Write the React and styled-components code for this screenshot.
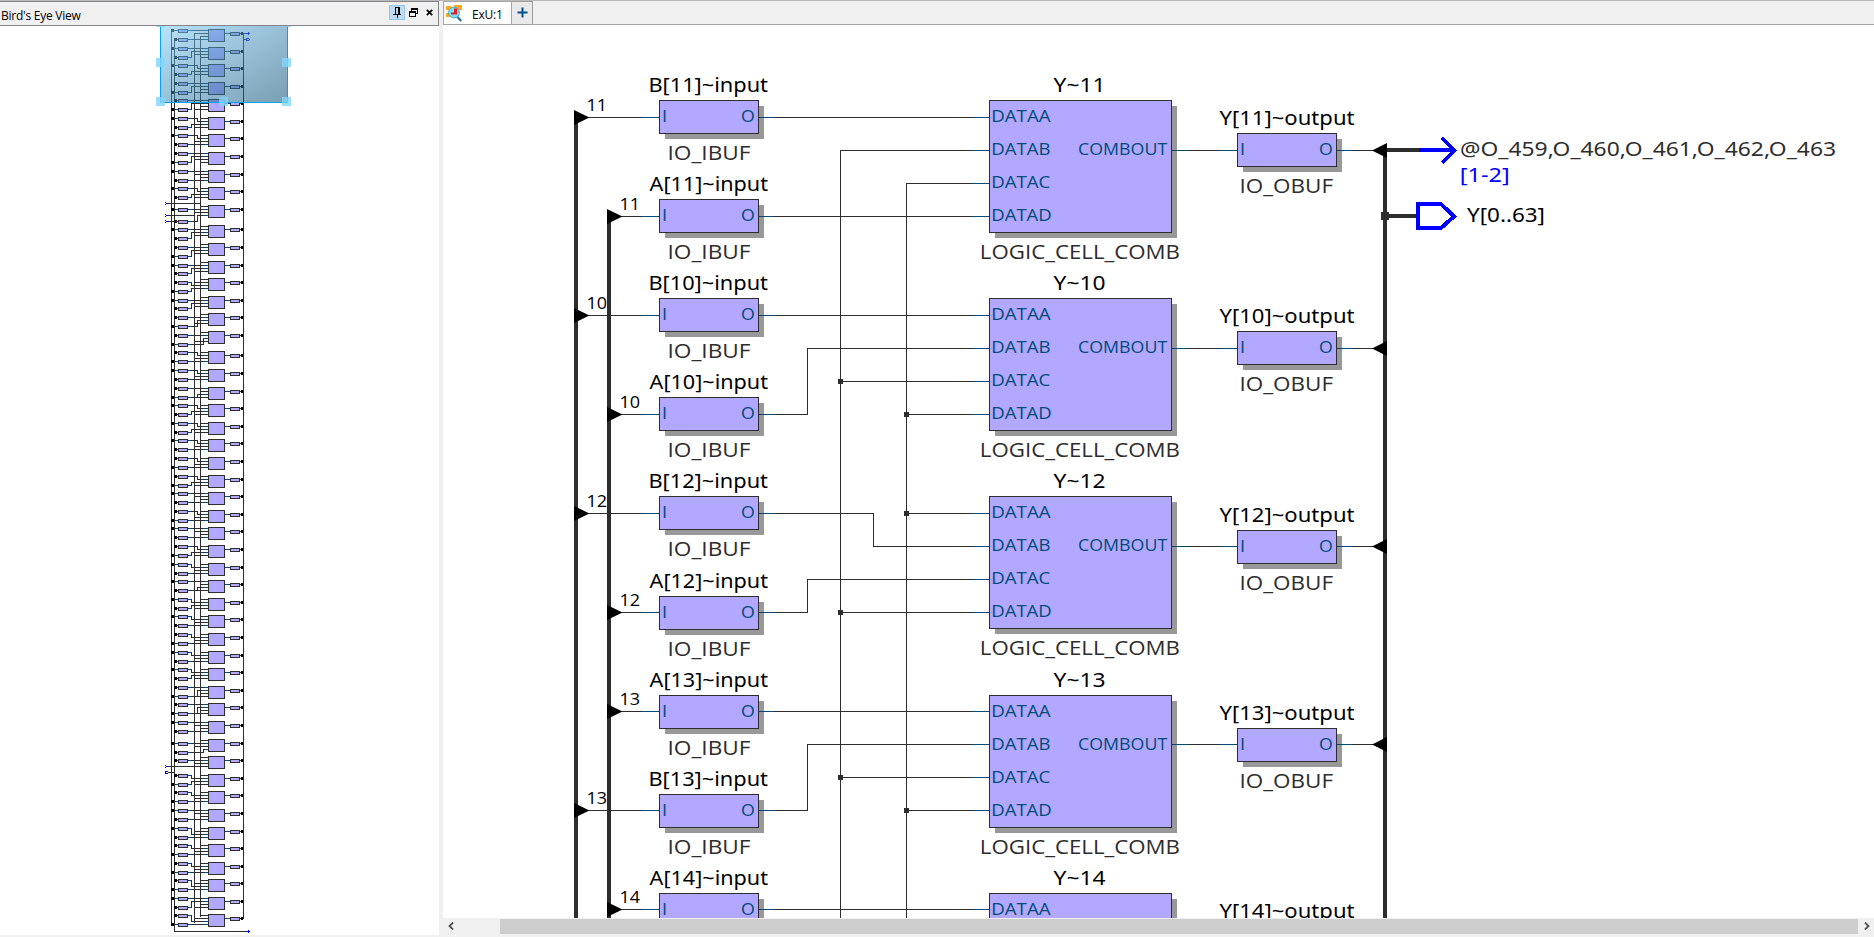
import React from "react";
import styled, { createGlobalStyle } from "styled-components";

const INK = "#2d2d2d";
const PIN = "#004b78";
const FILL = "#b3a8ff";

const Global = createGlobalStyle`
  html, body { margin: 0; padding: 0; height: 100%; overflow: hidden; }
  body { background: #f0f0f0; font-family: "Open Sans", "Noto Sans", sans-serif; color: #000; }
  * { box-sizing: border-box; }
  svg { display: block; }
`;

const Frame = styled.div`
  display: flex;
  width: 1874px;
  height: 937px;
  border-top: 1px solid #b9b9b9;
  background: #f0f0f0;
`;

const Dock = styled.section`
  display: flex;
  flex-direction: column;
  width: 439px;
  height: 934px;
  background: #fff;
`;

const DockHeader = styled.header`
  display: flex;
  align-items: flex-start;
  justify-content: space-between;
  height: 25px;
  padding: 3px 1px 0 1px;
  border: 1px solid #838388;
  border-left: 0;
  background: #f0f0f0;
`;

const DockTitle = styled.h1`
  margin: 3px 0 0;
  font-size: 12px;
  line-height: 16px;
  font-weight: 400;
  letter-spacing: -0.25px;
`;

const DockButtons = styled.div`
  display: flex;
  gap: 0;
`;

const DockButton = styled.button`
  display: flex;
  align-items: center;
  justify-content: center;
  width: 16px;
  height: 15px;
  padding: 0;
  border: 1px solid ${(p) => (p.$on ? "#94c6ee" : "transparent")};
  background: ${(p) => (p.$on ? "#bfdcf4" : "transparent")};
`;

const Editor = styled.main`
  display: flex;
  flex-direction: column;
  width: 1431px;
  margin-left: 4px;
`;

const TabBar = styled.nav`
  display: flex;
  height: 24px;
  border-bottom: 1px solid #a5a5a5;
`;

const Tab = styled.div`
  display: flex;
  align-items: center;
  gap: 9px;
  width: 69px;
  height: 24px;
  padding: 0 0 0 2px;
  border: 1px solid #a5a5a5;
  background: #fff;
  font-size: 12px;
`;

const TabLabel = styled.span`
  padding-top: 4px;
  line-height: 14px;
  letter-spacing: -0.2px;
`;

const AddTab = styled.button`
  display: flex;
  align-items: center;
  justify-content: center;
  width: 21px;
  height: 24px;
  padding: 0 0 2px;
  border: 1px solid #a0a0a0;
  border-left-width: 0;
  background: #e9e9e9;
`;

const Canvas = styled.div`
  height: 893px;
  background: #fff;
  overflow: hidden;
`;

const ScrollBar = styled.div`
  display: flex;
  align-items: center;
  height: 16px;
`;

const ScrollArrow = styled.div`
  display: flex;
  align-items: center;
  padding-left: ${(p) => p.$pad}px;
  width: ${(p) => p.$w}px;
`;

const Thumb = styled.div`
  flex: 1;
  height: 15px;
  background: #cdcdcd;
`;

const Wire = styled.path`
  fill: none;
  stroke: ${(p) => p.$color || INK};
  stroke-width: ${(p) => p.$w || 1};
  shape-rendering: crispEdges;
`;

const Box = styled.rect`
  fill: ${FILL};
  stroke: ${INK};
  stroke-width: 1;
  shape-rendering: crispEdges;
`;

const Shadow = styled.rect`
  fill: #989898;
  shape-rendering: crispEdges;
`;

const Dot = styled.rect`
  fill: ${(p) => p.$color || INK};
  shape-rendering: crispEdges;
`;

const Arrow = styled.path`
  fill: #000;
`;

const Label = styled.text`
  font-family: ${(p) => (p.$title ? '"Noto Sans", "Open Sans"' : '"Open Sans", "Noto Sans"')}, sans-serif;
  font-size: ${(p) => p.$size}px;
  fill: ${(p) => p.$color || "#000"};
`;

const CANVAS_BOTTOM = 918;

function Text({ x1, x2, y, size = 20.6, color, title, children }) {
  if (y - size * 0.7 > CANVAS_BOTTOM) return null;
  return (
    <Label x={x1} y={y} textLength={x2 - x1} lengthAdjust="spacingAndGlyphs" $size={size} $color={color} $title={title}>
      {children}
    </Label>
  );
}

/* ---------- schematic ---------- */

const boxTop = (wire) => (wire - 17 >= 500 ? wire - 16 : wire - 17);

function Buffer({ x, wire, title, type, t1, t2, k1, k2 }) {
  const top = boxTop(wire);
  return (
    <g>
      <Shadow x={x + 5.5} y={top + 5.5} width={99} height={33} />
      <Box x={x} y={top} width={99} height={33} />
      <Wire $color={PIN} d={`M${x - 17.5} ${wire}H${x - 0.5}M${x + 99.5} ${wire}h15`} />
      <Text title x1={t1} x2={t2} y={top - 8.5}>{title}</Text>
      <Text x1={k1} x2={k2} y={top + 59.5} color={INK}>{type}</Text>
      <Text x1={x + 2.4} x2={x + 7.6} y={top + 21.5} size={16.7} color={PIN}>I</Text>
      <Text x1={x + 81.6} x2={x + 95.4} y={top + 21.5} size={16.7} color={PIN}>O</Text>
    </g>
  );
}

function InputBuffer({ wire, bus, index }) {
  const bx = bus === "B" ? 574 : 607;
  return (
    <g>
      <Wire d={`M${bx + 10} ${wire}H642M774 ${wire}h3`} />
      <Arrow d={`M${bx} ${wire - 7.5}L${bx + 15.5} ${wire}L${bx} ${wire + 7.5}Z`} />
      <Text x1={bx + 12.4} x2={bx + 33} y={wire - 6.3} size={16.7}>{index}</Text>
      <Buffer x={659.5} wire={wire} title={`${bus}[${index}]~input`} type="IO_IBUF" t1={bus === "B" ? 648.4 : 649.6} t2={768} k1={667.5} k2={750.5} />
    </g>
  );
}

const PORTS = ["DATAA", "DATAB", "DATAC", "DATAD"];

function LogicCell({ wire, index }) {
  const top = boxTop(wire);
  return (
    <g>
      <Shadow x={995} y={top + 5.5} width={182} height={132} />
      <Box x={989.5} y={top} width={182} height={132} />
      {PORTS.map((p, i) => (
        <g key={p}>
          <Wire $color={PIN} d={`M972 ${wire + i * 33}H989`} />
          <Text x1={991.2} x2={i === 3 ? 1051.8 : i === 0 ? 1050.6 : 1050.4} y={top + 21.5 + i * 33} size={16.7} color={PIN}>{p}</Text>
        </g>
      ))}
      <Text x1={1078} x2={1167.2} y={top + 54.5} size={16.7} color={PIN}>COMBOUT</Text>
      <Text title x1={1053.5} x2={1105.5} y={top - 8.5}>{`Y~${index}`}</Text>
      <Text x1={979.8} x2={1180} y={top + 158.5} color={INK}>LOGIC_CELL_COMB</Text>
      <Wire $color={PIN} d={`M1172 ${wire + 33}h15`} />
      <Wire d={`M1187 ${wire + 33}H1221`} />
    </g>
  );
}

function OutputBuffer({ wire, index }) {
  return (
    <g>
      <Wire d={`M1352 ${wire}H1375`} />
      <Buffer x={1237.5} wire={wire} title={`Y[${index}]~output`} type="IO_OBUF" t1={1219.5} t2={1354.5} k1={1239.5} k2={1333} />
      <Arrow d={`M1387 ${wire - 7.5}L1372 ${wire}L1387 ${wire + 7.5}Z`} />
    </g>
  );
}

const ROWS = [
  { wire: 117.5, index: 11, order: ["B", "A"] },
  { wire: 315.5, index: 10, order: ["B", "A"] },
  { wire: 513.5, index: 12, order: ["B", "A"] },
  { wire: 711.5, index: 13, order: ["A", "B"] },
  { wire: 909.5, index: 14, order: ["A"] },
];

const NETS = [
  "M774 117.5H972", "M774 216.5H972", "M840.5 925V150.5H972", "M906.5 925V183.5H972",
  "M774 315.5H972", "M774 414.5H807.5V348.5H972", "M840.5 381.5H972", "M906.5 414.5H972",
  "M906.5 513.5H972", "M774 513.5H873.5V546.5H972", "M774 612.5H807.5V579.5H972", "M840.5 612.5H972",
  "M774 711.5H972", "M774 810.5H807.5V744.5H972", "M840.5 777.5H972", "M906.5 810.5H972",
  "M774 909.5H972",
];

const JUNCTIONS = [[840, 381], [906, 414], [906, 513], [840, 612], [840, 777], [906, 810]];

function Schematic() {
  return (
    <svg width="1431" height="893" viewBox="443 25 1431 893">
      <Wire $w={4} d="M576 117V925M609 216V925" />
      <Wire $w={4} d="M1385 150V925M1385 150H1419M1385 216H1418" />
      <Wire d={NETS.join("")} />
      {JUNCTIONS.map(([x, y]) => <Dot key={`${x}-${y}`} x={x - 2} y={y - 2} width={5} height={5} />)}
      <Dot x={1381} y={212} width={8} height={8} />
      {ROWS.map((r) => (
        <g key={r.index}>
          {r.order.map((bus, i) => (
            <InputBuffer key={bus} wire={r.wire + i * 99} bus={bus} index={r.index} />
          ))}
          <LogicCell wire={r.wire} index={r.index} />
          <OutputBuffer wire={r.wire + 33} index={r.index} />
        </g>
      ))}
      <Wire $color="#00f" $w={4} d="M1419 150H1454M1442 138L1454.5 150.5L1442 163" />
      <Wire $color="#00f" $w={4} d="M1418 204H1441L1454 216.5L1441 228H1418Z" />
      <Text title x1={1460} x2={1836} y={155.7} color={INK}>@O_459,O_460,O_461,O_462,O_463</Text>
      <Text title x1={1459.8} x2={1509.8} y={181.8} color="#00f">[1-2]</Text>
      <Text title x1={1467} x2={1545} y={221.7}>Y[0..63]</Text>
    </svg>
  );
}

/* ---------- bird's eye ---------- */

// [cell top, buses feeding the two buffers, port order (1/2 buffers, v/w trunks), first bend, second bend, first and second buffer offset]
const OVERVIEW = [
  [29, "BA", "1vw2"], [47, "BA", "12vw"], [64, "BA", "w12v", 197, 191], [82, "AB", "12wv"],
  [99, "AB", "12wv"], [117, "BA", "w12v", 197, 191], [134, "BA", "w1v2", 197], [152, "AB", "12vw"],
  [170, "BA", "1vw2"], [187, "BA", "w12v", 197, 191], [205, "BA", "w1v2", 0, 197, 3, 15], [225, "BA", "w12v", 0, 191, 3, 12],
  [243, "AB", "w12v", 0, 191, 3, 12], [261, "BA", "w12v", 0, 191, 3, 11], [278, "AB", "wv12", 191, 191, 3, 12], [296, "BA", "w12v", 0, 191, 3, 11],
  [313, "AB", "w12v", 0, 197, 3, 12], [331, "AB", "w12v", 0, 203, 3, 12], [351, "AB", "w1v2", 197], [369, "BA", "w1v2", 197],
  [387, "AB", "1w2v", 0, 197], [404, "BA", "w12v", 197, 191], [422, "BA", "w12v", 197, 191], [439, "BA", "w1v2", 197],
  [457, "AB", "w1v2", 197], [475, "AB", "w12v", 197, 191], [492, "BA", "1vw2"], [510, "AB", "w1v2", 197],
  [527, "BA", "1vw2"], [545, "AB", "w12v", 197, 191], [563, "BA", "w1v2", 191], [580, "BA", "1w2v", 0, 197],
  [598, "BA", "w12v", 191, 191], [615, "BA", "w1v2", 191], [633, "AB", "w1v2", 191], [651, "BA", "w1v2", 191],
  [668, "BA", "w12v", 191, 191], [686, "AB", "12wv", 0, 197], [703, "AB", "12wv", 0, 197], [721, "BA", "1vw2"],
  [739, "BA", "w1v2", 0, 203, 3, 12], [756, "A", "w1v", 191, 0, 3], [774, "AB", "w12v", 191, 191], [791, "AB", "w1v2", 191],
  [809, "BA", "1vw2"], [827, "BA", "wv12", 191, 191], [844, "AB", "w1v2", 191], [862, "AB", "w1v2", 191],
  [879, "AB", "wv12", 191, 191], [897, "BA", "12wv"], [914, "AB", "wv12", 191, 191],
];

function MiniRow({ row }) {
  const [top, sides, ports, b1, b2, o1 = 0, o2 = 9] = row;
  const py = (k) => top + 1.5 + 3 * ports.indexOf(k);
  const bufs = [...sides].map((s, i) => {
    const off = i ? o2 : o1;
    return { s, y: top + off + 1.5, dst: py(i ? "2" : "1"), bend: (i ? b2 : b1) || 191 };
  });
  return (
    <g>
      {bufs.map(({ s, y, dst, bend }, i) => (
        <g key={i}>
          <Wire d={`M${s === "B" ? 172 : 175} ${y}H178`} />
          <Wire d={Math.abs(dst - y) < 2 ? `M188 ${y}H208` : `M188 ${y}H${bend + 0.5}V${dst}H208`} />
          <Wire $color={PIN} d={`M176 ${y}h2M188 ${y}h3M204 ${dst}h4`} />
          <Dot $color="#000" x={s === "B" ? 171 : 174} y={y - 1.5} width={3} height={3} />
          <Box x={178.5} y={y - 1} width={9} height={3} />
        </g>
      ))}
      {ports.includes("v") && <Wire d={`M194 ${py("v")}H208`} />}
      {ports.includes("w") && <Wire d={`M200 ${py("w")}H208`} />}
      <Box x={208.5} y={top + 0.5} width={16} height={12} />
      <Wire $color={PIN} d={`M225 ${top + 4.5}h5`} />
      <Box x={230.5} y={top + 3.5} width={9} height={3} />
      <Wire d={`M240 ${top + 4.5}h3`} />
      <Dot $color="#000" x={241} y={top + 3} width={2} height={3} />
    </g>
  );
}

const HANDLES = [[156, 18], [219, 18], [282, 18], [156, 58], [282, 58], [156, 97], [219, 97], [282, 97]];

function BirdsEye() {
  return (
    <svg width="439" height="909" viewBox="0 26 439 909">
      <defs>
        <linearGradient id="lens" x1="0" y1="0" x2="1" y2="1">
          <stop offset="0" stopColor="#82d2ff" stopOpacity="0.55" />
          <stop offset="1" stopColor="#00456e" stopOpacity="0.52" />
        </linearGradient>
      </defs>
      <Wire d="M171.5 30V926M174.5 39V931.5H247M194.5 33.5V922.5M200.5 36.5V916.5M243.5 33V919M194 33.5H208M200 36.5H208" />
      {OVERVIEW.map((r) => <MiniRow key={r[0]} row={r} />)}
      <Wire d="M168 203.5H200M168 215.5H194M168 221.5H178M168 766.5H208M168 772.5H174" />
      <Wire $color="#00f" d="M165 202.5h1M165 204.5h1M166 203.5h2M165 214.5h1M165 216.5h1M166 215.5h2M165 220.5h1M165 222.5h1M166 221.5h2M165 765.5h1M165 767.5h1M166 766.5h2" />
      <Wire $color="#00f" d="M168 771.5H165.5V773.5H168" />
      <Wire $color="#00f" d="M246 33.5h4M248.5 32v3M246 931.5h4M248.5 930v3M249 38.5H246.5V40.5H249M249.5 39v1" />
      <Wire d="M244 33.5h2M244 39.5h2" />
      <rect x="160.5" y="20" width="127" height="82.5" fill="url(#lens)" stroke="#00a2f2" />
      {HANDLES.map(([x, y]) => <rect key={`${x}-${y}`} x={x} y={y} width="9" height="9" fill="#82d5ff" fillOpacity="0.8" />)}
    </svg>
  );
}

/* ---------- icons ---------- */

const PinIcon = () => (
  <svg width="8" height="11" viewBox="0 0 8 11" shapeRendering="crispEdges">
    <path d="M2.5 7V.5H6M5.5 0V7M6.5 0V7M0 7.5H8M4.5 8V11" fill="none" stroke="#000" />
  </svg>
);
const RestoreIcon = () => (
  <svg width="9" height="9" viewBox="0 0 9 9" shapeRendering="crispEdges">
    <path d="M2.5 3V1.5H8.5V5.5H6M2 .5H9M.5 4.5H6.5V8.5H.5ZM0 3.5H7" fill="none" stroke="#000" />
  </svg>
);
const CloseIcon = () => (
  <svg width="7" height="7" viewBox="0 0 7 7">
    <path d="M.8 .8L6.2 6.2M6.2 .8L.8 6.2" stroke="#000" strokeWidth="1.7" />
  </svg>
);
const ViewerIcon = () => (
  <svg width="17" height="17" viewBox="0 0 17 17">
    <path d="M0 1H5V5H0ZM8 0H16V5H8ZM0 8H5V12H0Z" fill="#fba919" />
    <path d="M11.5 12L15.2 16" stroke="#1d6b9c" strokeWidth="2.2" />
    <circle cx="8" cy="7.5" r="5.4" fill="#7fdcf5" stroke="#46a9cc" strokeWidth="1" />
    <path d="M8 3.5H11V9.5H5V7.5H8Z" fill="#e31d25" />
  </svg>
);
const PlusIcon = () => (
  <svg width="11" height="11" viewBox="0 0 11 11">
    <path d="M5.5 .5V10.5M.5 5.5H10.5" stroke="#00508c" strokeWidth="2" />
  </svg>
);
const Chevron = ({ right }) => (
  <svg width="6" height="8" viewBox="0 0 6 8">
    <path d={right ? "M1 .5L4.5 4L1 7.5" : "M5 .5L1.5 4L5 7.5"} fill="none" stroke="#505050" strokeWidth="1.8" />
  </svg>
);

export default function App() {
  return (
    <>
      <Global />
      <Frame>
        <Dock>
          <DockHeader>
            <DockTitle>Bird's Eye View</DockTitle>
            <DockButtons>
              <DockButton $on aria-label="Pin"><PinIcon /></DockButton>
              <DockButton aria-label="Restore"><RestoreIcon /></DockButton>
              <DockButton aria-label="Close"><CloseIcon /></DockButton>
            </DockButtons>
          </DockHeader>
          <BirdsEye />
        </Dock>
        <Editor>
          <TabBar>
            <Tab>
              <ViewerIcon />
              <TabLabel>ExU:1</TabLabel>
            </Tab>
            <AddTab aria-label="New tab"><PlusIcon /></AddTab>
          </TabBar>
          <Canvas><Schematic /></Canvas>
          <ScrollBar>
            <ScrollArrow $w={57} $pad={5}><Chevron /></ScrollArrow>
            <Thumb />
            <ScrollArrow $w={16} $pad={6}><Chevron right /></ScrollArrow>
          </ScrollBar>
        </Editor>
      </Frame>
    </>
  );
}
